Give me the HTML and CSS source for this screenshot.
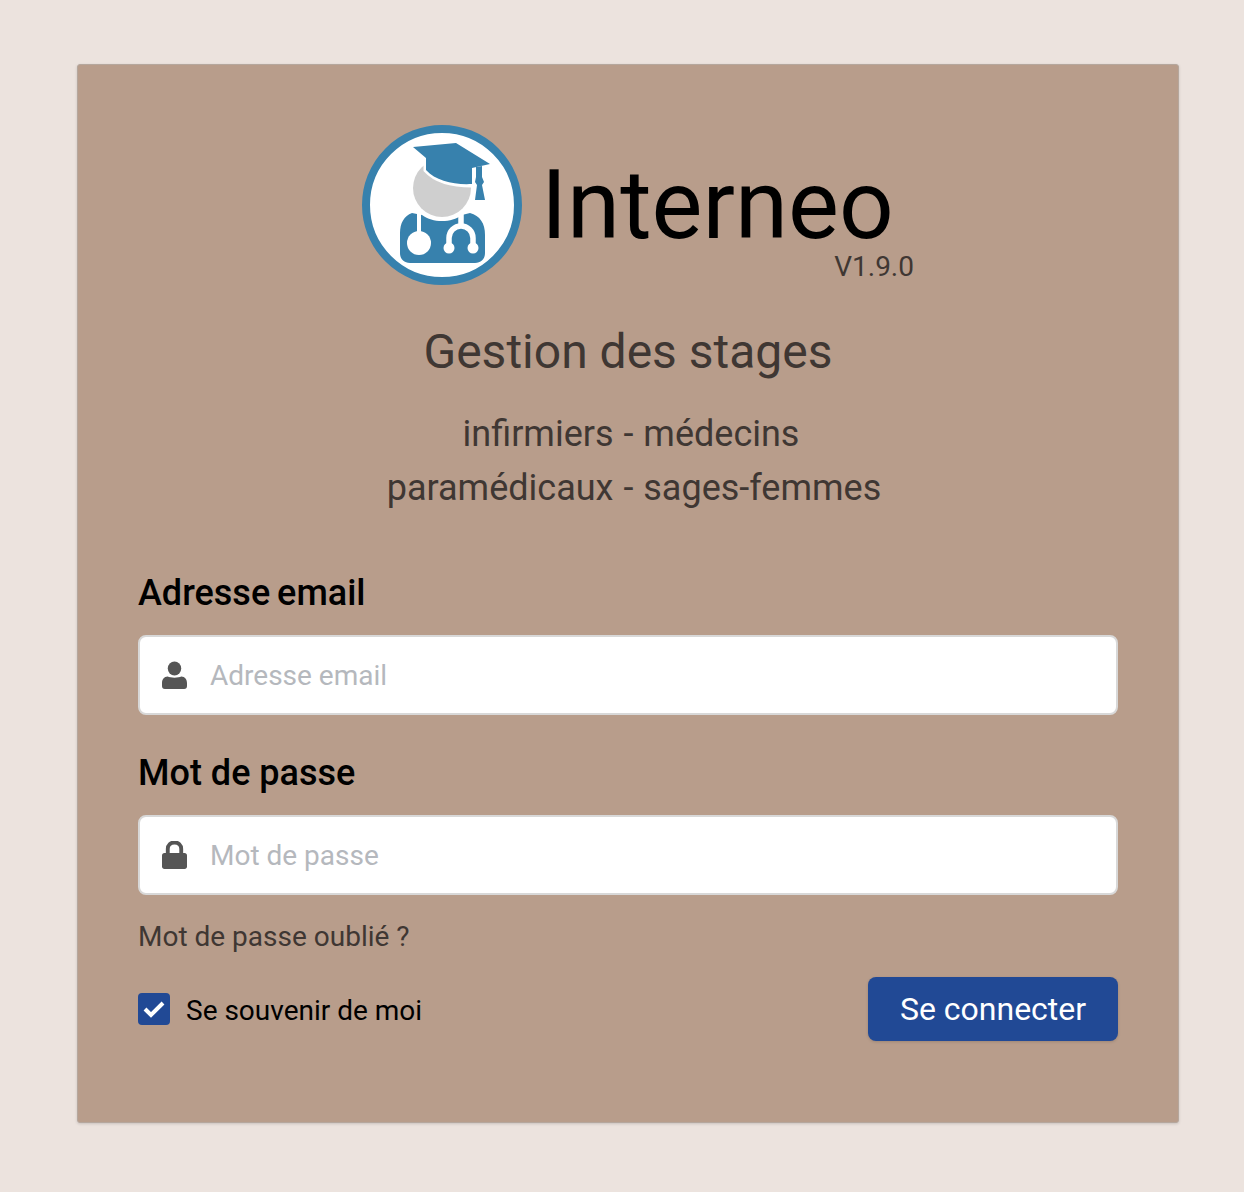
FILE: index.html
```html
<!DOCTYPE html>
<html lang="fr">
<head>
    <meta charset="UTF-8">
    <meta name="viewport" content="width=device-width, initial-scale=1.0">
    <title>Interneo</title>
    <link rel="stylesheet" href="styles.css">
</head>
<body>
    <div class="card">
        <div class="brand">
            <svg class="logo" viewBox="0 0 160 160" width="160" height="160">
                <circle cx="80" cy="80" r="76" fill="#fff" stroke="#3781ad" stroke-width="8"/>
                <circle cx="80" cy="63" r="29" fill="#cfcfcf"/>
                <!-- cap -->
                <path d="M50 18 L64 30 L64 45 C74 56 92 60 110 60 L110 36 Z" fill="#fff" stroke="#fff" stroke-width="5"/>
                <path d="M51 22 L94 18 L128 39 L110 43 L110 59 C92 60 74 56 64 45 L64 33 Z" fill="#3781ad"/>
                <path d="M114 42 L120 41 L120 52 L122 57 L120 60 L123 75 L113 75 L115 60 L113 57 L114 52 Z" fill="#3781ad"/>
                <!-- body -->
                <path d="M50 88 C42 91 38 98 38 108 L38 128 C38 134 42 138 48 138 L113 138 C119 138 123 134 123 128 L123 110 C123 98 118 91 108 88 L100 90 C94 94 88 96 80 96 C72 96 66 94 60 90 Z" fill="#3781ad"/>
                <path d="M57 86 L57 108" stroke="#fff" stroke-width="4" fill="none"/>
                <circle cx="57" cy="118" r="12" fill="#fff"/>
                <path d="M99 89 L99 101 M87 123 L87 113 A12 12 0 0 1 111 113 L111 123" stroke="#fff" stroke-width="5.500" fill="none"/>
                <circle cx="87" cy="123" r="5.500" fill="#fff"/>
                <circle cx="111" cy="123" r="5.500" fill="#fff"/>
            </svg>
            <div class="brand-text">
                <div class="brand-name">Interneo</div>
                <div class="brand-version">V1.9.0</div>
            </div>
        </div>

        <h2 class="subtitle">Gestion des stages</h2>
        <p class="audience"><span class="audience-first">infirmiers - médecins</span><br>paramédicaux - sages-femmes</p>

        <form class="login">
            <label class="field-label field-label-email" for="email">Adresse email</label>
            <div class="input-box">
                <svg class="input-icon" viewBox="0 0 26 28" width="25" height="28" preserveAspectRatio="none">
                    <circle cx="13" cy="7.500" r="7" fill="#555"/>
                    <path d="M6 15.500 C8.500 17 17.500 17 20 15.500 C24 15.500 26 18.500 26 22 L26 25 C26 27 25 28 23 28 L3 28 C1 28 0 27 0 25 L0 22 C0 18.500 2 15.500 6 15.500 Z" fill="#555"/>
                </svg>
                <input id="email" type="email" placeholder="Adresse email">
            </div>

            <label class="field-label" for="password">Mot de passe</label>
            <div class="input-box input-box-last">
                <svg class="input-icon" viewBox="0 0 26 28" width="25" height="28" preserveAspectRatio="none">
                    <path d="M2.500 12 L23.500 12 C25 12 26 13 26 14.500 L26 25.500 C26 27 25 28 23.500 28 L2.500 28 C1 28 0 27 0 25.500 L0 14.500 C0 13 1 12 2.500 12 Z" fill="#555"/>
                    <path d="M6 13 L6 8 C6 4 9 1.500 13 1.500 C17 1.500 20 4 20 8 L20 13" fill="none" stroke="#555" stroke-width="4"/>
                </svg>
                <input id="password" type="password" placeholder="Mot de passe">
            </div>

            <a class="forgot" href="#">Mot de passe oublié ?</a>

            <div class="login-footer">
                <label class="remember">
                    <span class="checkbox">
                        <svg viewBox="0 0 22 18" width="22" height="18">
                            <path d="M2 9 L8 15 L20 3" fill="none" stroke="#fff" stroke-width="4"/>
                        </svg>
                    </span>
                    <span class="remember-text">Se souvenir de moi</span>
                </label>
                <button type="button" class="submit">Se connecter</button>
            </div>
        </form>
    </div>
</body>
</html>
```

FILE: styles.css
```css
body {
    margin: 0;
    padding: 64px 65px 70px 77px;
    background-color: #ece3de;
    font-family: Roboto, "Liberation Sans", sans-serif;
    color: #000;
}
.card {
    background: #b89d8b;
    border: 1px solid #b5a79d;
    border-radius: 3px;
    box-shadow: 0 1px 3px rgba(0,0,0,0.15);
    padding: 60px 60px 80px;
    height: 917px;
}
.brand {
    display: flex;
    align-items: flex-start;
    gap: 19px;
    height: 160px;
    padding-left: 224px;
}
.logo {
    flex-shrink: 0;
}
.brand-text {
    display: flex;
    flex-direction: column;
    width: 373px;
}
.brand-name {
    font-size: 96px;
    line-height: 96px;
    margin-top: 32px;
}
.brand-version {
    font-size: 28px;
    line-height: 28px;
    color: #3f3733;
    text-align: right;
}
.subtitle {
    margin: 35px 0 0;
    font-size: 48px;
    line-height: 64px;
    font-weight: 400;
    color: #3f3733;
    text-align: center;
}
.audience {
    margin: 23px 0 0;
    padding-left: 12px;
    font-size: 36px;
    line-height: 54px;
    word-spacing: 1px;
    color: #3f3733;
    text-align: center;
}
.audience-first {
    padding-right: 6px;
}
.login {
    margin-top: 51px;
}
.field-label {
    display: block;
    font-size: 36px;
    font-weight: 500;
    line-height: 54px;
}
.field-label-email {
    word-spacing: -2px;
}
.input-box {
    display: flex;
    align-items: center;
    gap: 23px;
    height: 76px;
    margin: 15px 0 31px;
    padding: 0 22px;
    background: white;
    border: 2px solid #d8d8d8;
    border-radius: 8px;
}
.input-box-last {
    margin-bottom: 21px;
}
.input-box input {
    flex: 1;
    border: none;
    outline: none;
    padding: 0;
    font-family: inherit;
    font-size: 28px;
    background: transparent;
}
.input-box input::placeholder {
    color: #b5b8bd;
    opacity: 1;
}
.input-icon {
    flex-shrink: 0;
}
.forgot {
    display: block;
    font-size: 28px;
    line-height: 42px;
    color: #3f3733;
    text-decoration: none;
}
.login-footer {
    display: flex;
    justify-content: space-between;
    align-items: center;
    margin-top: 19px;
}
.remember {
    display: flex;
    align-items: center;
    gap: 16px;
    font-size: 28px;
}
.remember-text {
    margin-top: 2px;
}
.checkbox {
    display: flex;
    align-items: center;
    justify-content: center;
    width: 32px;
    height: 32px;
    background: #214995;
    border-radius: 4px;
}
.submit {
    width: 250px;
    height: 64px;
    background: #214995;
    color: white;
    border: none;
    border-radius: 8px;
    font-family: inherit;
    font-size: 32px;
    cursor: pointer;
    box-shadow: 0 1px 3px rgba(0,0,0,0.15);
}
```
